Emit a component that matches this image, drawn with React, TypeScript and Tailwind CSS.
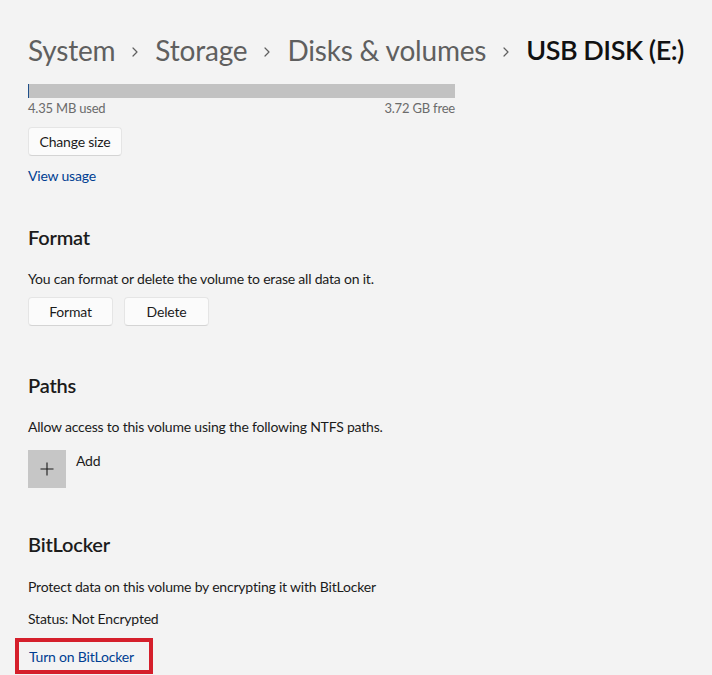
import React from 'react';

const Chevron: React.FC = () => (
  <svg width="12" height="12" viewBox="0 0 12 12" className="mx-[14px] mt-[4px] shrink-0">
    <path d="M4 2l4 4-4 4" fill="none" stroke="#5f5f5f" strokeWidth="1.2" strokeLinecap="round" strokeLinejoin="round" />
  </svg>
);

const WinButton: React.FC<{ label: string; className?: string }> = ({ label, className }) => (
  <button
    className={`h-[29px] rounded-[4px] border border-[#e5e5e5] border-b-[#d4d4d4] bg-[#fbfbfb] text-[14px] text-[#1b1b1b] ${className ?? ''}`}
  >
    {label}
  </button>
);

const SectionTitle: React.FC<{ children: React.ReactNode }> = ({ children }) => (
  <h2 className="text-[20px] font-semibold leading-[28px] text-[#1b1b1b]">{children}</h2>
);

export default function App() {
  return (
    <div className="min-h-screen bg-[#f3f3f3] pl-[28px] font-['Lato',sans-serif] tracking-[-0.2px] text-[#1b1b1b]">
      {/* breadcrumb */}
      <div className="flex items-center whitespace-nowrap pt-[30px] text-[28px] leading-[40px] tracking-[-0.2px]">
        <span className="text-[#5f5f5f]">System</span>
        <Chevron />
        <span className="text-[#5f5f5f]">Storage</span>
        <Chevron />
        <span className="text-[#5f5f5f]">Disks &amp; volumes</span>
        <Chevron />
        <span className="text-[27px] font-semibold tracking-[-0.5px] text-[#111]">USB DISK (E:)</span>
      </div>

      {/* usage */}
      <div className="mt-[14px] w-[427px]">
        <div className="h-[14px] bg-[#c2c2c2] border-l border-[#1f4f8a]" />
        <div className="flex justify-between text-[13px] leading-[20px] text-[#6b6b6b]">
          <span>4.35 MB used</span>
          <span>3.72 GB free</span>
        </div>
      </div>
      <WinButton label="Change size" className="mt-[9px] w-[94px]" />
      <div className="mt-[10px] text-[14px] leading-[20px] text-[#003e92]">View usage</div>

      {/* format */}
      <div className="mt-[37px]">
        <SectionTitle>Format</SectionTitle>
        <p className="mt-[18px] text-[14px] leading-[20px]">You can format or delete the volume to erase all data on it.</p>
        <div className="mt-[8px] flex gap-[11px]">
          <WinButton label="Format" className="w-[85px]" />
          <WinButton label="Delete" className="w-[85px]" />
        </div>
      </div>

      {/* paths */}
      <div className="mt-[45px]">
        <SectionTitle>Paths</SectionTitle>
        <p className="mt-[18px] text-[14px] leading-[20px]">Allow access to this volume using the following NTFS paths.</p>
        <div className="mt-[13px] flex items-start gap-[10px]">
          <div className="flex h-[38px] w-[38px] items-center justify-center bg-[#c6c6c6]">
            <svg width="14" height="14" viewBox="0 0 14 14">
              <path d="M7 0.5v13M0.5 7h13" stroke="#1b1b1b" strokeWidth="1.1" />
            </svg>
          </div>
          <span className="mt-[1px] text-[14px] leading-[20px]">Add</span>
        </div>
      </div>

      {/* bitlocker */}
      <div className="mt-[42px]">
        <SectionTitle>BitLocker</SectionTitle>
        <p className="mt-[19px] text-[14px] leading-[20px]">Protect data on this volume by encrypting it with BitLocker</p>
        <p className="mt-[12px] text-[14px] leading-[20px]">Status: Not Encrypted</p>
        <div className="-ml-[13px] mt-[9px] w-[138px] border-[4px] border-[#d51f2b] px-[10px] py-[2px]">
          <span className="text-[14px] leading-[20px] text-[#003e92]">Turn on BitLocker</span>
        </div>
      </div>
    </div>
  );
}
